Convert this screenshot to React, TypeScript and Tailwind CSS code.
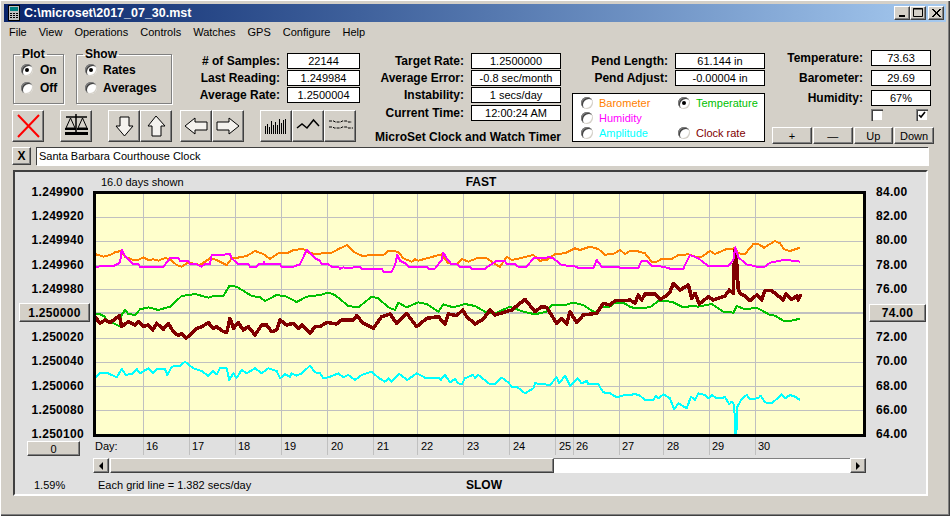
const raised =
  "border border-t-white border-l-white border-r-[#404040] border-b-[#404040] bg-[#d4d0c8] shadow-[inset_-1px_-1px_0_#808080]";

// traced curve pieces: offset + points at 3x
const seg = (ox: number, oy: number, pts: number[][]) =>
  pts.map(([x, y]) => `${ox + x / 3},${oy + y / 3}`).join(" ");

const orange = [
  seg(0, 170, [[285,252],[310,260],[330,255],[345,247],[362,243],[375,260],[400,270],[415,270],[430,262],[445,270],[460,268],[475,272],[495,264],[510,268],[530,285],[545,290],[560,280],[575,280],[600,285],[615,275],[630,265],[650,270],[680,285],[695,265],[720,262],[740,258],[765,243],[790,252],[810,267],[835,250],[860,250],[880,240],[910,237],[930,250],[960,252]]),
  seg(320, 170, [[0,252],[10,248],[35,248],[60,235],[82,225],[100,245],[125,257],[190,255],[205,243],[235,245],[250,265],[275,275],[285,268],[295,272],[320,265],[365,253],[385,280],[410,282],[425,267],[445,275],[475,263],[500,265],[530,285],[540,290],[560,260],[575,270],[600,265],[640,255],[660,272],[680,270],[705,252],[735,250],[765,235],[780,240],[810,230],[835,237],[855,254],[880,252],[900,240],[915,252],[930,243]]),
  seg(630, 170, [[0,243],[20,243],[45,250],[65,275],[80,275],[95,267],[125,267],[145,255],[175,253],[200,262],[215,260],[240,243],[255,252],[290,237],[315,235],[325,250],[345,252],[370,222],[385,222],[402,233],[435,213],[450,220],[462,238],[480,243],[510,233]]),
].join(" ");

const magenta = [
  seg(0, 170, [[285,290],[340,288],[360,278],[365,240],[375,258],[400,282],[415,282],[420,290],[490,290],[510,265],[535,265],[540,272],[565,272],[570,283],[590,283],[605,290],[615,282],[630,282],[635,255],[690,253],[695,265],[715,283],[745,283],[750,290],[770,290],[775,283],[790,283],[792,275],[795,283],[840,283],[845,290],[880,290],[900,283],[920,240],[945,265],[960,272]]),
  seg(320, 170, [[0,272],[5,283],[25,283],[35,290],[55,290],[60,296],[70,292],[80,295],[120,290],[125,296],[185,296],[190,305],[215,305],[225,285],[232,255],[240,272],[255,280],[265,290],[320,290],[325,296],[345,296],[365,270],[370,248],[380,265],[395,283],[410,283],[420,290],[450,290],[455,296],[495,296],[515,282],[530,272],[555,272],[560,283],[585,283],[595,290],[620,290],[640,265],[690,262],[700,265],[725,285],[770,290],[775,295],[820,295],[830,270],[845,290],[895,290],[900,295],[930,295]]),
  seg(630, 170, [[0,293],[25,293],[35,272],[50,272],[65,288],[100,290],[120,296],[160,296],[180,255],[205,265],[235,288],[295,287],[310,270],[316,232],[325,262],[350,283],[380,290],[405,290],[420,278],[460,270],[490,272],[510,275]]),
].join(" ");

const green = [
  seg(0, 170, [[285,433],[300,433],[315,440],[320,452],[345,462],[358,468],[365,435],[375,420],[385,432],[405,435],[420,418],[445,412],[475,420],[510,410],[545,378],[585,372],[625,383],[640,378],[670,378],[688,348],[710,350],[755,378],[780,382],[795,393],[830,375],[860,380],[890,396],[920,380],[960,375]]),
  seg(320, 170, [[0,375],[25,368],[45,375],[85,408],[115,412],[155,380],[175,385],[205,412],[225,420],[235,398],[260,412],[295,397],[320,402],[355,425],[370,403],[400,412],[435,402],[465,408],[500,428],[530,428],[570,410],[610,425],[645,433],[680,425],[695,405],[735,405],[760,398],[790,405],[825,428],[840,413],[870,410],[885,398],[910,398],[930,410]]),
  seg(630, 170, [[0,410],[15,415],[60,412],[85,393],[125,395],[160,412],[185,408],[205,410],[245,402],[280,425],[310,428],[320,408],[345,418],[380,413],[420,435],[435,437],[460,452],[485,452],[510,446]]),
].join(" ");

const darkRed = [
  seg(0, 170, [[285,440],[300,460],[315,450],[330,458],[345,447],[358,437],[365,470],[385,455],[405,465],[415,455],[430,470],[445,465],[458,480],[470,460],[490,478],[505,460],[520,485],[535,497],[545,490],[558,505],[575,490],[590,475],[605,470],[625,458],[640,475],[650,470],[665,482],[680,488],[690,445],[700,475],[715,458],[730,480],[745,470],[765,495],[785,465],[800,465],[815,485],[830,480],[840,450],[860,465],[880,460],[895,475],[905,465],[930,490],[945,470],[960,470]]),
  seg(320, 170, [[0,470],[20,457],[50,462],[65,450],[100,450],[110,437],[130,460],[160,475],[185,440],[210,432],[230,460],[260,430],[290,470],[320,445],[355,440],[375,462],[385,432],[410,437],[428,420],[440,440],[465,462],[490,447],[510,420],[525,435],[575,420],[615,388],[645,425],[665,410],[680,412],[710,460],[725,445],[740,462],[750,425],[770,458],[790,435],[830,430],[850,400],[870,405],[885,392],[915,392],[930,390]]),
  seg(630, 170, [[0,390],[15,400],[25,375],[35,390],[45,372],[75,372],[90,388],[105,380],[120,365],[130,340],[150,360],[175,345],[185,385],[195,370],[208,402],[235,380],[250,390],[285,378],[298,360],[310,370],[314,240],[318,245],[325,360],[330,370],[345,378],[360,392],[380,375],[395,390],[405,362],[425,362],[460,390],[468,372],[485,388],[500,378],[505,390],[512,372]]),
].join(" ");

const cyan = [
  seg(0, 345, [[285,100],[300,85],[325,85],[335,90],[350,97],[365,72],[378,90],[400,85],[410,72],[420,85],[445,70],[460,85],[470,72],[495,72],[502,90],[515,65],[540,62],[555,50],[580,70],[605,78],[625,93],[640,78],[650,88],[660,70],[680,70],[688,105],[700,85],[710,98],[725,75],[740,85],[765,70],[785,85],[805,70],[830,78],[840,100],[855,88],[870,95],[875,85],[890,92],[905,85],[930,62],[945,82],[960,85]]),
  seg(320, 345, [[0,85],[10,100],[30,95],[55,85],[70,97],[85,90],[105,105],[125,90],[155,80],[175,98],[195,110],[205,100],[215,110],[238,87],[262,105],[290,85],[315,98],[340,100],[355,98],[362,105],[375,90],[390,112],[405,102],[415,115],[425,118],[435,100],[458,90],[465,98],[475,90],[510,118],[525,118],[545,98],[565,112],[575,125],[590,125],[615,145],[640,130],[645,115],[690,120],[710,97],[718,115],[735,92],[750,122],[772,100],[785,115],[800,108],[805,118],[835,118],[850,142],[870,145],[890,157],[915,150],[930,150]]),
  seg(630, 345, [[0,150],[15,147],[30,152],[45,165],[70,165],[78,152],[85,160],[100,148],[120,160],[132,193],[145,175],[170,190],[183,155],[195,165],[205,145],[225,150],[235,160],[245,150],[260,160],[285,157],[298,178],[305,170],[313,180],[315,270],[319,270],[322,185],[335,162],[350,150],[360,162],[385,160],[392,152],[405,172],[425,175],[440,162],[455,148],[465,160],[480,150],[495,155],[510,165]]),
].join(" ");

const gridY = [217, 241, 265, 289, 338, 362, 386, 410];
const gridX = [143, 189, 235, 281, 327, 373, 417, 463, 509, 555, 573, 619, 663, 709, 755];
const days = [
  ["16", 146], ["17", 192], ["18", 238], ["19", 284], ["20", 331], ["21", 377], ["22", 421], ["23", 467],
  ["24", 513], ["25", 559], ["26", 576], ["27", 622], ["28", 667], ["29", 712], ["30", 758],
] as const;

const leftAxis = ["1.249900", "1.249920", "1.249940", "1.249960", "1.249980", "1.250000", "1.250020", "1.250040", "1.250060", "1.250080", "1.250100"];
const rightAxis = ["84.00", "82.00", "80.00", "78.00", "76.00", "74.00", "72.00", "70.00", "68.00", "66.00", "64.00"];

function Radio({ on }: { on?: boolean }) {
  return (
    <span className="flex h-[12px] w-[12px] shrink-0 items-center justify-center rounded-full bg-white shadow-[inset_1px_1px_0_#808080,inset_-1px_-1px_0_#d4d0c8,inset_2px_2px_0_#404040]">
      {on && <span className="h-[4px] w-[4px] rounded-full bg-black" />}
    </span>
  );
}

function Field({ label, value, box = "w-[73px]" }: { label: string; value: string; box?: string }) {
  return (
    <div className="flex h-[16px] items-center justify-end gap-[7px]">
      <span className="text-[12px] font-bold">{label}</span>
      <span className={`flex h-[16px] items-center justify-center border border-black bg-white ${box}`}>{value}</span>
    </div>
  );
}

function Group({ title, children, className }: { title: string; children: React.ReactNode; className: string }) {
  return (
    <fieldset className={`h-[57px] border border-[#808080] shadow-[1px_1px_0_#fff,inset_1px_1px_0_#fff] ${className}`}>
      <legend className="ml-[6px] h-[14px] px-[2px] text-[12px] leading-[14px] font-bold">{title}</legend>
      <div className="flex flex-col gap-[4px] pt-[2px] pl-[7px] text-[12px] font-bold">{children}</div>
    </fieldset>
  );
}

function Tool({ children }: { children: React.ReactNode }) {
  return (
    <div className={`h-[32px] w-[32px] ${raised}`}>
      <svg width="30" height="30" viewBox="1 1 30 30">{children}</svg>
    </div>
  );
}

function ArrowV({ up }: { up?: boolean }) {
  const pts = up ? "16,6 25,16 21,16 21,26 12,26 12,16 8,16" : "12,7 21,7 21,16 25,16 16.5,26 8,16 12,16";
  return (
    <Tool>
      <polygon points={pts} fill="#f4f2ee" stroke="#000" strokeWidth="1" />
    </Tool>
  );
}

function ArrowH({ right }: { right?: boolean }) {
  const pts = right ? "5,12 17,12 17,8 27,16 17,24 17,20 5,20" : "27,12 15,12 15,8 5,16 15,24 15,20 27,20";
  return (
    <Tool>
      <polygon points={pts} fill="#f4f2ee" stroke="#000" strokeWidth="1" />
    </Tool>
  );
}

function WinButton({ children, className = "" }: { children: React.ReactNode; className?: string }) {
  return (
    <div className={`h-[14px] w-[16px] ${raised} ${className}`}>
      <svg width="14" height="12" viewBox="0 0 14 12">{children}</svg>
    </div>
  );
}

export default function App() {
  return (
    <div className="h-[516px] w-[950px] overflow-hidden bg-[#d4d0c8] p-[4px] font-['Liberation_Sans',sans-serif] text-[11px] leading-[14px] text-black shadow-[inset_1px_1px_0_#fff,inset_-1px_-1px_0_#404040,inset_-2px_-2px_0_#808080]">
      {/* title bar */}
      <div className="flex h-[18px] items-center bg-gradient-to-r from-[#0a246a] to-[#a6caf0] pr-[2px] pl-[4px]">
        <svg width="12" height="16" viewBox="0 0 12 16" className="shrink-0">
          <rect x="0.5" y="0.5" width="11" height="15" fill="#c0c0c0" stroke="#000" />
          <rect x="2" y="2" width="8" height="4" fill="#008080" />
          <path d="M2 8h2v1H2zM5 8h2v1H5zM8 8h2v1H8zM2 10h2v1H2zM5 10h2v1H5zM8 10h2v1H8zM2 12h2v1H2zM5 12h2v1H5zM8 12h2v1H8z" fill="#000" />
        </svg>
        <span className="ml-[4px] text-[12.5px] font-bold text-white">C:\microset\2017_07_30.mst</span>
        <div className="ml-auto flex">
          <WinButton>
            <rect x="4" y="8" width="6" height="2" fill="#000" />
          </WinButton>
          <WinButton>
            <path d="M2.5 1.5h9v8h-9z M2 2h10" fill="none" stroke="#000" />
          </WinButton>
          <WinButton className="ml-[2px]">
            <path d="M3 2l8 8M4 2l8 8M11 2l-8 8M12 2l-8 8" stroke="#000" />
          </WinButton>
        </div>
      </div>

      {/* menu */}
      <div className="flex h-[20px] items-center gap-[12px] pl-[5px]">
        {["File", "View", "Operations", "Controls", "Watches", "GPS", "Configure", "Help"].map((m) => (
          <span key={m}>{m}</span>
        ))}
      </div>

      {/* controls */}
      <div className="flex h-[105px] pt-[5px] pl-[8px]">
        <div className="w-[348px] shrink-0">
          <div className="flex">
            <Group title="Plot" className="ml-[1px] w-[51px]">
              <label className="flex items-center gap-[7px]"><Radio on />On</label>
              <label className="flex items-center gap-[7px]"><Radio />Off</label>
            </Group>
            <Group title="Show" className="ml-[12px] w-[96px]">
              <label className="flex items-center gap-[6px] pl-[1px]"><Radio on />Rates</label>
              <label className="flex items-center gap-[6px] pl-[1px]"><Radio />Averages</label>
            </Group>
            <div className="flex w-[188px] flex-col gap-[1px] pt-[6px]">
              <Field label="# of Samples:" value="22144" />
              <Field label="Last Reading:" value="1.249984" />
              <Field label="Average Rate:" value="1.2500004" />
            </div>
          </div>
          <div className="mt-[6px] flex">
            <Tool>
              <path d="M6 5L27 27M27 5L6 27" stroke="#ff0000" strokeWidth="2" fill="none" />
            </Tool>
            <div className="ml-[16px]">
              <Tool>
                <g fill="none" stroke="#000">
                  <path d="M16 4v18" strokeWidth="1.5" />
                  <path d="M6 7h21" strokeWidth="1.5" />
                  <path d="M10.500 8L6 18h9zM22.500 8L18 18h9z" />
                  <path d="M5 19h11M17 19h11" strokeWidth="2" />
                  <path d="M5 23.500h23" strokeWidth="3" />
                </g>
              </Tool>
            </div>
            <div className="ml-[16px]"><ArrowV /></div>
            <ArrowV up />
            <div className="ml-[8px]"><ArrowH /></div>
            <ArrowH right />
            <div className="ml-[16px]">
              <Tool>
                <path
                  d="M5.500 24v-8M7.500 24v-10M9.500 24v-7M11.500 24v-13M13.500 24v-9M15.500 24v-12M17.500 24v-9M19.500 24v-15M21.500 24v-11M23.500 24v-14M25.500 24v-15"
                  stroke="#000"
                />
              </Tool>
            </div>
            <Tool>
              <polyline points="5,18 10,14 15,18 21.500,10 27,16" fill="none" stroke="#000" strokeWidth="1.500" />
            </Tool>
            <Tool>
              <g stroke="#000" fill="none" strokeDasharray="3 1">
                <path d="M5 11h5l1 1h6l1-1h5l1 1h4" />
                <path d="M5 17h4l1 1h7l1-1h5l1 1h5" />
              </g>
            </Tool>
          </div>
        </div>

        <div className="ml-[14px] flex w-[187px] shrink-0 flex-col gap-[1px] pt-[6px]">
          <Field label="Target Rate:" value="1.2500000" box="w-[90px]" />
          <Field label="Average Error:" value="-0.8 sec/month" box="w-[90px]" />
          <Field label="Instability:" value="1 secs/day" box="w-[90px]" />
          <div className="mt-[1px]">
            <Field label="Current Time:" value="12:00:24 AM" box="w-[90px]" />
          </div>
          <div className="mt-[8px] text-right text-[12px] font-bold whitespace-nowrap">MicroSet Clock and Watch Timer</div>
        </div>

        <div className="ml-[11px] w-[193px] shrink-0 pt-[6px]">
          <div className="flex flex-col gap-[1px]">
            <Field label="Pend Length:" value="61.144 in" box="w-[90px]" />
            <Field label="Pend Adjust:" value="-0.00004 in" box="w-[90px]" />
          </div>
          <div className="mt-[7px] grid h-[49px] grid-cols-[97px_1fr] grid-rows-3 items-center border border-black bg-white pt-[1px] pl-[8px]">
            <label className="flex items-center gap-[6px] text-[#ff8000]"><Radio />Barometer</label>
            <label className="flex items-center gap-[6px] text-[#00c000]"><Radio on />Temperature</label>
            <label className="flex items-center gap-[6px] text-[#ff00ff]"><Radio />Humidity</label>
            <span />
            <label className="flex items-center gap-[6px] text-[#00ffff]"><Radio />Amplitude</label>
            <label className="flex items-center gap-[6px] text-[#800000]"><Radio />Clock rate</label>
          </div>
        </div>

        <div className="ml-[7px] flex w-[162px] shrink-0 flex-col pt-[3px]">
          <div className="flex flex-col gap-[4px] pr-[3px]">
            <Field label="Temperature:" value="73.63" box="w-[60px] ml-[1px]" />
            <Field label="Barometer:" value="29.69" box="w-[60px] ml-[1px]" />
            <Field label="Humidity:" value="67%" box="w-[60px] ml-[1px]" />
          </div>
          <div className="mt-[3px] ml-[99px] flex w-[57px] justify-between">
            <span className="h-[12px] w-[12px] bg-white shadow-[inset_1px_1px_0_#808080,inset_2px_2px_0_#404040,inset_-1px_-1px_0_#d4d0c8]" />
            <span className="flex h-[12px] w-[12px] items-center justify-center bg-white shadow-[inset_1px_1px_0_#808080,inset_2px_2px_0_#404040,inset_-1px_-1px_0_#d4d0c8]">
              <svg width="8" height="8" viewBox="0 0 8 8">
                <path d="M1 4l2 2 4-5" fill="none" stroke="#000" strokeWidth="1.600" />
              </svg>
            </span>
          </div>
          <div className="mt-[6px] flex gap-[1px]">
            {["+", "—", "Up", "Down"].map((b) => (
              <div key={b} className={`flex h-[17px] w-[40px] items-center justify-center ${raised}`}>{b}</div>
            ))}
          </div>
        </div>
      </div>

      {/* clock name */}
      <div className="flex h-[18px] pl-[8px]">
        <div className={`flex h-[18px] w-[19px] items-center justify-center text-[12px] font-bold ${raised}`}>X</div>
        <div className="ml-[5px] flex w-[892px] items-center bg-white pl-[3px] shadow-[inset_1px_1px_0_#404040,1px_1px_0_#fff]">
          Santa Barbara Courthouse Clock
        </div>
      </div>

      {/* chart panel */}
      <div className="mt-[5px] ml-[9px] flex h-[326px] w-[915px] border-2 border-t-[#404040] border-r-white border-b-white border-l-[#404040] bg-[#e0e0e0]">
        <div className="flex w-[78px] shrink-0 flex-col pt-[14px]">
          <div className="flex h-[254px] flex-col items-end justify-between pr-[9px] text-[12px] font-bold tracking-[0.3px]">
            {leftAxis.map((v) =>
              v === "1.250000" ? (
                <div key={v} className="-mr-[6px] flex h-[12px] w-[71px] items-center">
                  <div className={`flex h-[19px] w-[71px] shrink-0 items-center justify-center ${raised}`}>{v}</div>
                </div>
              ) : (
                <div key={v} className="flex h-[12px] items-center">{v}</div>
              ),
            )}
          </div>
          <div className={`mt-[1px] ml-[12px] flex h-[15px] w-[53px] items-center justify-center ${raised}`}>0</div>
          <div className="mt-[22px] pl-[19px]">1.59%</div>
        </div>

        <div className="w-[773px] shrink-0">
          <div className="grid h-[19px] grid-cols-[1fr_auto_1fr] items-center">
            <span className="pl-[8px]">16.0 days shown</span>
            <span className="pl-[3px] text-[12px] font-bold">FAST</span>
            <span />
          </div>
          <svg width="773" height="264" viewBox="93 191 773 264" className="block">
            <rect x="93" y="191" width="773" height="245" fill="#ffffcc" />
            <g stroke="#c0c0c0" shapeRendering="crispEdges">
              {gridY.map((y) => <line key={y} x1="96" x2="863" y1={y} y2={y} />)}
              <line x1="96" x2="863" y1="313" y2="313" strokeWidth="2" />
              {gridX.map((x) => <line key={x} x1={x} x2={x} y1="193" y2="455" />)}
            </g>
            <g fill="none" strokeLinejoin="round" shapeRendering="crispEdges">
              <polyline points={orange} stroke="#ff8000" strokeWidth="2" />
              <polyline points={green} stroke="#00c000" strokeWidth="2" />
              <polyline points={darkRed} stroke="#800000" strokeWidth="3.5" />
              <polyline points={magenta} stroke="#ff00ff" strokeWidth="2" />
              <polyline points={cyan} stroke="#00ffff" strokeWidth="2" />
            </g>
            <rect x="94.5" y="192" width="770" height="243" fill="none" stroke="#000" strokeWidth="3" shapeRendering="crispEdges" />
            <text x="95" y="450">Day:</text>
            {days.map(([d, x]) => (
              <text key={d} x={x} y="450">{d}</text>
            ))}
          </svg>
          <div className="mt-[3px] flex h-[15px]">
            <div className={`flex h-[15px] w-[16px] shrink-0 items-center justify-center ${raised}`}>
              <span className="h-0 w-0 border-y-[4px] border-r-[4px] border-y-transparent border-r-black" />
            </div>
            <div className={`ml-[1px] h-[15px] w-[444px] shrink-0 ${raised}`} />
            <div className="flex-1 border-t border-t-[#808080] bg-white" />
            <div className={`flex h-[15px] w-[16px] shrink-0 items-center justify-center ${raised}`}>
              <span className="h-0 w-0 border-y-[4px] border-l-[4px] border-y-transparent border-l-black" />
            </div>
          </div>
          <div className="mt-[5px] grid h-[14px] grid-cols-[1fr_auto_1fr] items-center">
            <span className="pl-[5px]">Each grid line = 1.382 secs/day</span>
            <span className="pl-[9px] text-[12px] font-bold">SLOW</span>
            <span />
          </div>
        </div>

        <div className="flex-1 pt-[14px]">
          <div className="flex h-[254px] flex-col justify-between pl-[10px] text-[12px] font-bold tracking-[0.3px]">
            {rightAxis.map((v) =>
              v === "74.00" ? (
                <div key={v} className="flex h-[12px] items-center">
                  <div className={`-ml-[7px] flex h-[18px] w-[57px] shrink-0 items-center justify-center ${raised}`}>{v}</div>
                </div>
              ) : (
                <div key={v} className="flex h-[12px] items-center">{v}</div>
              ),
            )}
          </div>
        </div>
      </div>
    </div>
  );
}
